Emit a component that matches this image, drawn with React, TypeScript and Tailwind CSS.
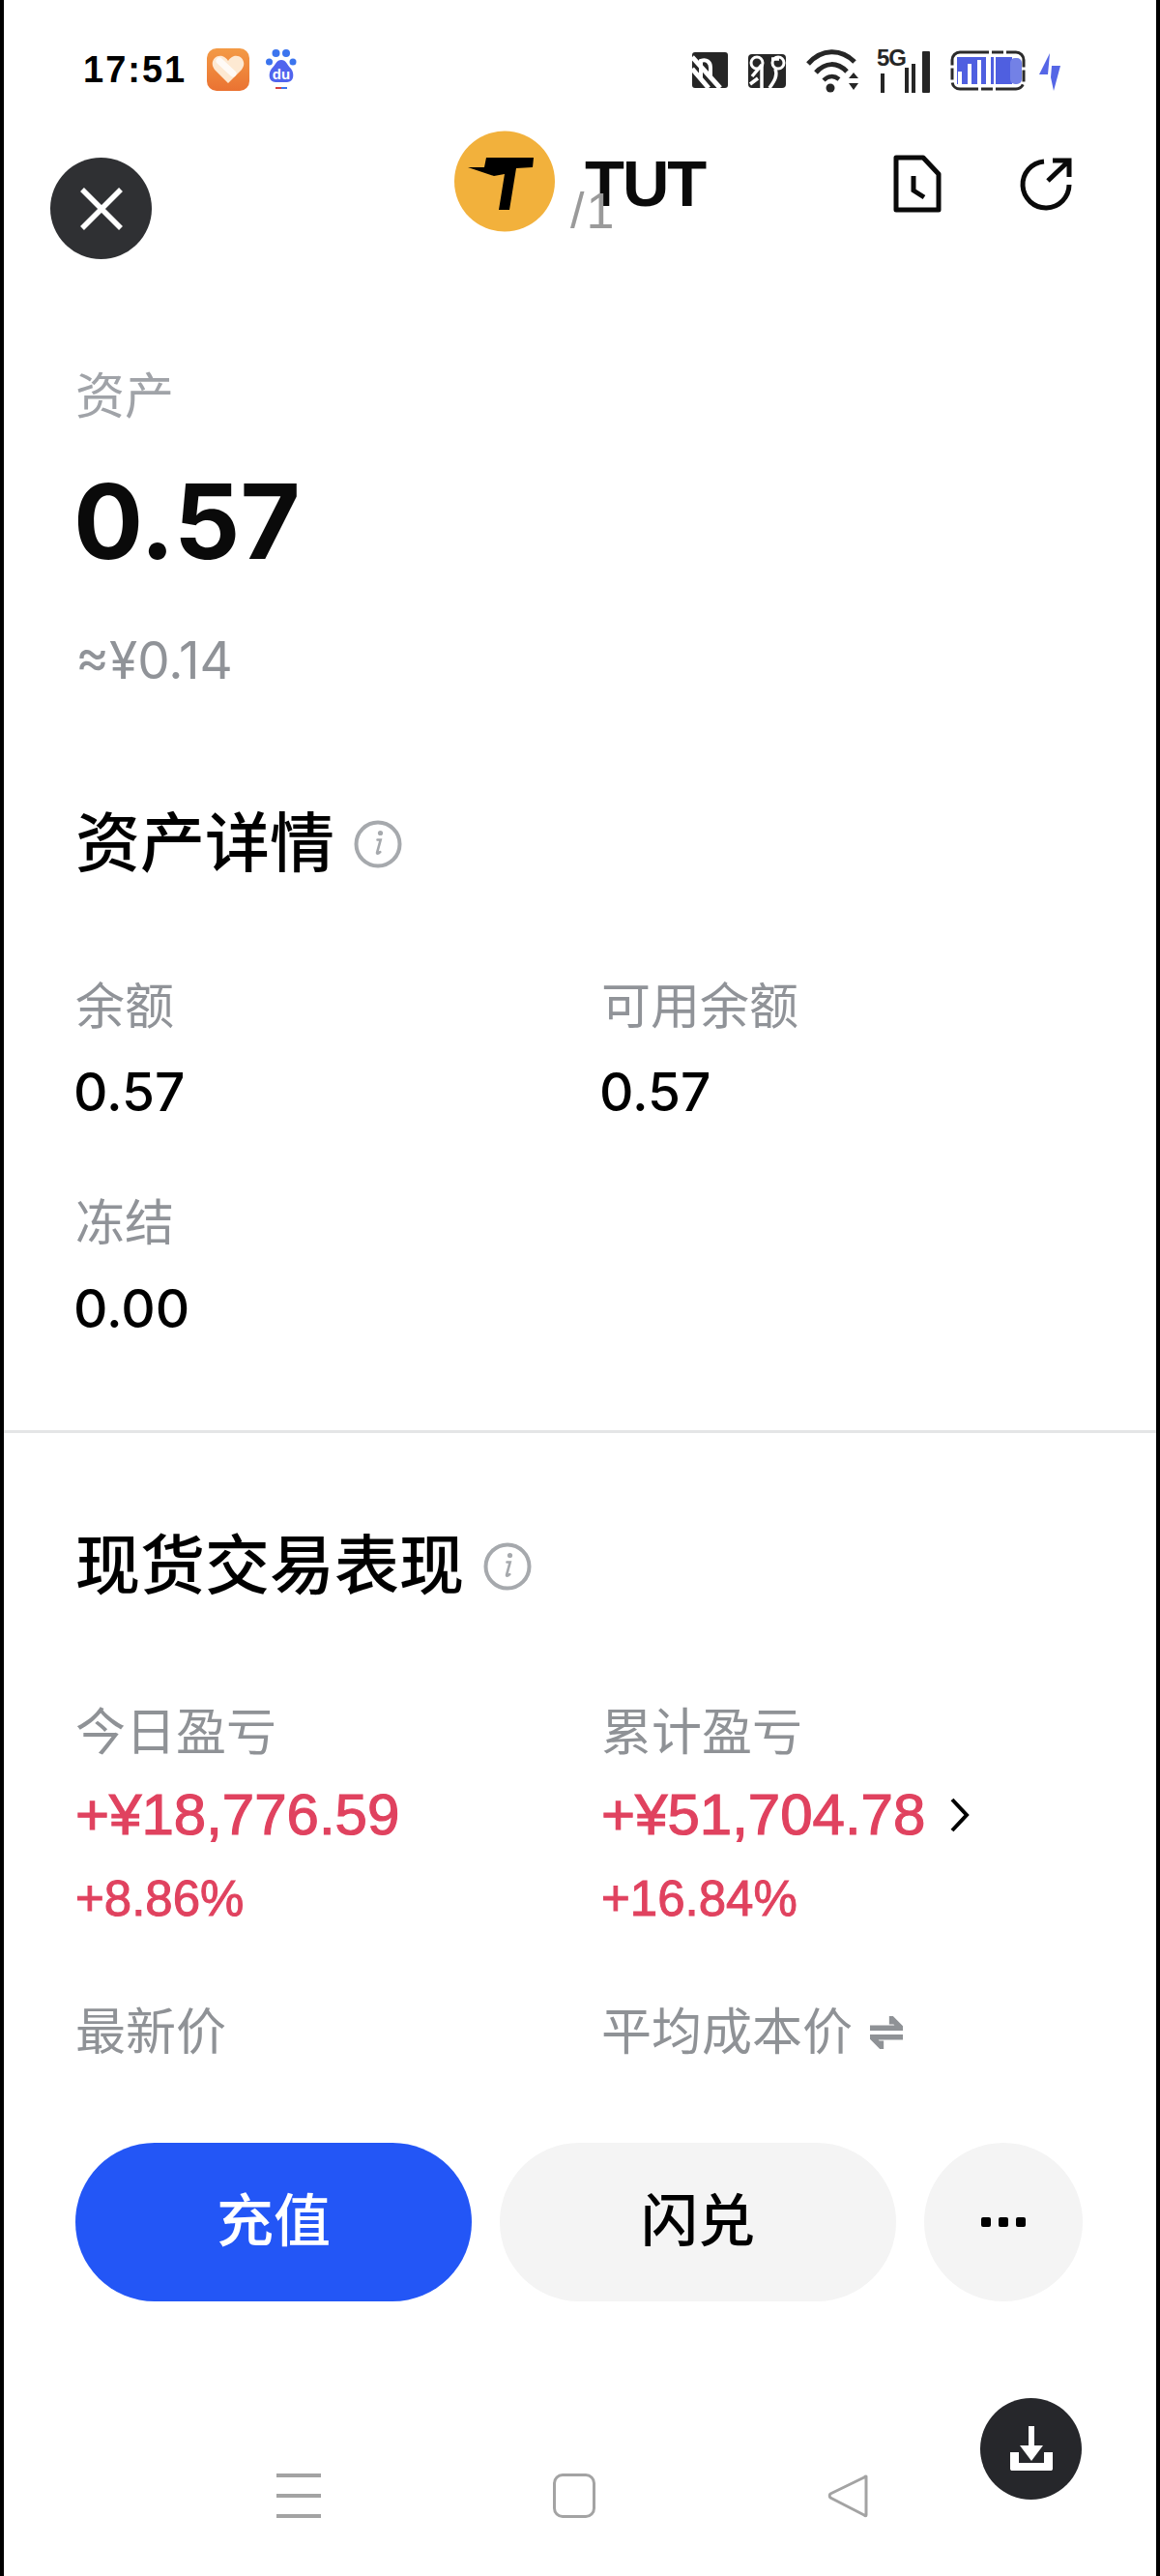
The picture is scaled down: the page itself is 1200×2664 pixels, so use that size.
import React from "react";

const SANS = "font-['Liberation_Sans','Noto_Sans_CJK_SC',sans-serif]";
const INTER = "font-['Inter','Noto_Sans_CJK_SC',sans-serif]";

function InfoIcon() {
  return (
    <svg width="50" height="50" viewBox="0 0 50 50" className="shrink-0">
      <circle cx="25" cy="25" r="22.5" fill="none" stroke="#a6a9ad" strokeWidth="4" />
      <circle cx="27.5" cy="13.5" r="2.6" fill="#a6a9ad" />
      <path d="M24.5 20.5h3.2l-3.6 13.2c-.3 1.2.7 1.6 3.2-.6" fill="none" stroke="#a6a9ad" strokeWidth="2.6" strokeLinecap="round" />
    </svg>
  );
}

function Field({ label, value }: { label: string; value: string }) {
  return (
    <div className="w-[544px] shrink-0">
      <div className="text-[51px] leading-[60px] text-[#909398]">{label}</div>
      <div className={`${INTER} ml-[-2px] mt-[24px] text-[55px] leading-[66px] font-medium text-black`}>{value}</div>
    </div>
  );
}

function StatusIcons() {
  return (
    <div className="flex items-center">
      <svg width="40" height="40" viewBox="0 0 40 40">
        <rect x="1" y="1" width="37" height="37" rx="3" fill="#262626" />
        <path d="M1 6 30 38M1 18 18 38" stroke="#fff" strokeWidth="5" />
        <path d="M10 30V10c6-2 10 1 10 7v12" fill="none" stroke="#fff" strokeWidth="4" />
      </svg>
      <svg width="40" height="40" viewBox="0 0 40 40" className="ml-[19px]">
        <rect x="0" y="3" width="39" height="35" rx="4" fill="#262626" />
        <circle cx="9" cy="12" r="6" fill="none" stroke="#fff" strokeWidth="3" />
        <circle cx="31" cy="12" r="6" fill="none" stroke="#fff" strokeWidth="3" />
        <path d="M4 26 14 14M14 14v24M24 8h8M28 18c3 8-2 14-6 20M2 34l8-6" fill="none" stroke="#fff" strokeWidth="3.5" />
      </svg>
      <svg width="56" height="46" viewBox="0 0 56 46" className="ml-[20px]">
        <path d="M2 16C16 0 36 0 50 14" fill="none" stroke="#262626" strokeWidth="5" />
        <path d="M10 25C20 14 32 14 42 24" fill="none" stroke="#262626" strokeWidth="5" />
        <path d="M18 33c5-5 11-5 16-1" fill="none" stroke="#262626" strokeWidth="4.5" />
        <circle cx="25" cy="41" r="4.5" fill="#262626" />
        <path d="M44 31h10l-5-6zM44 36h10l-5 7z" fill="#262626" />
      </svg>
      <div className="relative ml-[17px] h-[46px] w-[56px]">
        <span className={`${SANS} absolute left-[0px] top-[-3px] text-[24px] leading-[26px] font-bold tracking-[-1px] text-[#262626]`}>5G</span>
        <div className="absolute bottom-[0px] left-[4px] h-[20px] w-[4px] bg-[#262626]" />
        <div className="absolute bottom-[0px] left-[29px] h-[26px] w-[4px] bg-[#262626]" />
        <div className="absolute bottom-[0px] left-[36px] h-[30px] w-[4px] bg-[#262626]" />
        <div className="absolute bottom-[0px] left-[47px] h-[43px] w-[8px] rounded-[1px] bg-[#262626]" />
      </div>
      <svg width="78" height="42" viewBox="0 0 78 42" className="ml-[20px]">
        <rect x="2" y="2" width="74" height="38" rx="8" fill="none" stroke="#2b2b2b" strokeWidth="3" strokeDasharray="30 3 12 3" />
        <rect x="7" y="7" width="38" height="28" fill="#4f5fe0" />
        <rect x="8" y="22" width="4" height="14" fill="#fff" />
        <rect x="18" y="14" width="4" height="22" fill="#fff" />
        <rect x="28" y="10" width="4" height="26" fill="#fff" />
        <rect x="37" y="7" width="5" height="28" fill="#fff" />
        <rect x="47" y="7" width="17" height="28" fill="#4f5fe0" />
        <rect x="62" y="8" width="12" height="27" rx="5" fill="#7381e6" />
      </svg>
      <svg width="24" height="44" viewBox="0 0 24 44" className="ml-[13px]">
        <path d="M12 4 1 26h9zM14 17h9l-7 26-3-14z" fill="#5566e6" />
      </svg>
    </div>
  );
}

export default function App() {
  return (
    <div className={`${SANS} relative flex h-[2664px] w-[1200px] flex-col overflow-hidden border-x-[4px] border-black bg-white`}>
      {/* Status bar */}
      <div className="flex h-[100px] shrink-0 items-start justify-between pl-[82px] pr-[98px] pt-[50px]">
        <div className="flex items-center">
          <span className={`${SANS} w-[128px] text-[38px] leading-[44px] font-bold tracking-[2px] text-black`}>17:51</span>
          <div className="flex h-[44px] w-[44px] items-center justify-center rounded-[10px] bg-gradient-to-b from-[#f39a45] to-[#ea7232]">
            <svg width="34" height="30" viewBox="0 0 34 30">
              <path d="M17 29 3 15C-3 7 4-1 11 1c3 1 5 3 6 5 1-2 3-4 6-5 7-2 14 6 8 14z" fill="#fde9d2" />
              <path d="M8 6 22 19" stroke="#fff" strokeWidth="7" strokeLinecap="round" opacity="0.8" />
            </svg>
          </div>
          <svg width="32" height="44" viewBox="0 0 32 44" className="ml-[17px]">
            <circle cx="10.5" cy="5" r="4" fill="#3b74ee" />
            <circle cx="21" cy="5" r="4" fill="#3b74ee" />
            <circle cx="3.5" cy="14" r="3.5" fill="#3b74ee" />
            <circle cx="28" cy="14" r="3.5" fill="#3b74ee" />
            <path d="M16 12c5 0 6 5 10 9 4 5 3 14-4 14H10c-7 0-8-9-4-14 4-4 5-9 10-9z" fill="#5064ee" />
            <text x="16" y="32" textAnchor="middle" fontSize="15" fontWeight="700" fill="#fff" fontFamily="Liberation Sans">du</text>
            <rect x="10" y="40" width="6" height="2" fill="#d8403f" />
            <rect x="16" y="40" width="6" height="2" fill="#3b74ee" />
          </svg>
        </div>
        <StatusIcons />
      </div>

      {/* Header */}
      <div className="flex h-[110px] shrink-0 items-start pl-[466px] pr-[87px] pt-[35px]">
        <svg width="104" height="105" viewBox="0 0 104 105" className="shrink-0">
          <circle cx="52" cy="52.5" r="52" fill="#f2b13c" />
          <path d="M14 38 31 38 33 28H82L81 38 64 39 57 82H46L52 45 41 47Z" fill="#000" />
        </svg>
        <span className="ml-[31px] mt-[15px] text-[67px] leading-[80px] font-bold tracking-[-2px] text-[#0a0a0a]">TUT</span>
        <div className="ml-auto mt-[25px] flex items-center gap-[79px]">
          <svg width="50" height="60" viewBox="0 0 50 60">
            <path d="M3 3h28l16 17v37H3z" fill="none" stroke="#0a0a0a" strokeWidth="5" strokeLinejoin="round" />
            <path d="M21 22v15l11 7" fill="none" stroke="#0a0a0a" strokeWidth="5" />
          </svg>
          <svg width="56" height="56" viewBox="0 0 56 56">
            <path d="M27 5a24 24 0 1 0 26 24" fill="none" stroke="#0a0a0a" strokeWidth="5" />
            <path d="M31 25 52 5M36 4h17v17" fill="none" stroke="#0a0a0a" strokeWidth="5" />
          </svg>
        </div>
      </div>

      {/* Asset summary */}
      <div className="flex flex-col pl-[74px] pt-[171px]">
        <div className="text-[51px] leading-[60px] text-[#a0a3a8]">资产</div>
        <div className={`${INTER} ml-[-2px] mt-[32px] text-[107px] leading-[132px] font-bold text-[#0a0a0a]`}>0.57</div>
        <div className={`${INTER} mt-[49px] text-[53px] leading-[58px] text-[#909398]`}>≈¥0.14</div>
      </div>

      {/* Details */}
      <div className="flex flex-col pl-[74px] pt-[121px]">
        <div className="flex items-center gap-[20px]">
          <span className="text-[67px] leading-[80px] font-medium text-black">资产详情</span>
          <InfoIcon />
        </div>
        <div className="mt-[99px] flex">
          <Field label="余额" value="0.57" />
          <Field label="可用余额" value="0.57" />
        </div>
        <div className="mt-[74px]">
          <Field label="冻结" value="0.00" />
        </div>
      </div>

      <div className="mt-[93px] h-[3px] shrink-0 bg-[#e4e5e6]" />

      {/* Performance */}
      <div className="flex flex-col pl-[74px] pt-[98px]">
        <div className="flex items-center gap-[20px]">
          <span className="text-[67px] leading-[80px] font-medium text-black">现货交易表现</span>
          <InfoIcon />
        </div>
        <div className="mt-[102px] flex">
          <div className="w-[544px] shrink-0">
            <div className="text-[52px] leading-[60px] text-[#8f9296]">今日盈亏</div>
            <div className="mt-[20px] text-[60px] leading-[70px] text-[#e0425f] [-webkit-text-stroke:1.2px_#e0425f]">+¥18,776.59</div>
            <div className="mt-[22px] text-[51px] leading-[60px] text-[#e0425f] [-webkit-text-stroke:1px_#e0425f]">+8.86%</div>
          </div>
          <div className="w-[544px] shrink-0">
            <div className="text-[52px] leading-[60px] text-[#8f9296]">累计盈亏</div>
            <div className="mt-[20px] flex items-center text-[60px] leading-[70px] text-[#e0425f] [-webkit-text-stroke:1.2px_#e0425f]">
              <span>+¥51,704.78</span>
              <svg width="24" height="40" viewBox="0 0 24 40" className="ml-[24px]">
                <path d="M4 4 19 20 4 36" fill="none" stroke="#000" strokeWidth="4" />
              </svg>
            </div>
            <div className="mt-[22px] text-[51px] leading-[60px] text-[#e0425f] [-webkit-text-stroke:1px_#e0425f]">+16.84%</div>
          </div>
        </div>
        <div className="mt-[78px] flex">
          <div className="w-[544px] shrink-0 text-[52px] leading-[60px] text-[#8f9296]">最新价</div>
          <div className="flex items-center text-[52px] leading-[60px] text-[#8f9296]">
            <span>平均成本价</span>
            <svg width="34" height="34" viewBox="0 0 36 36" className="ml-[18px]">
              <path d="M0 13h34L24 3v6" fill="none" stroke="#8f9296" strokeWidth="6" />
              <path d="M36 23H2l10 10v-6" fill="none" stroke="#8f9296" strokeWidth="6" />
            </svg>
          </div>
        </div>
      </div>

      {/* Action buttons */}
      <div className="mt-[84px] flex items-center gap-[29px] pl-[74px]">
        <div className="flex h-[164px] w-[410px] items-center justify-center rounded-full bg-[#2356f6] text-[59px] font-medium text-white">充值</div>
        <div className="flex h-[164px] w-[410px] items-center justify-center rounded-full bg-[#f4f4f4] text-[59px] font-medium text-black">闪兑</div>
        <div className="flex h-[164px] w-[164px] items-center justify-center gap-[8px] rounded-full bg-[#f4f4f4]">
          <span className="h-[10px] w-[10px] rounded-[2px] bg-black" />
          <span className="h-[10px] w-[10px] rounded-[2px] bg-black" />
          <span className="h-[10px] w-[10px] rounded-[2px] bg-black" />
        </div>
      </div>

      {/* Navigation bar */}
      <div className="mt-[178px] flex h-[46px] items-center pl-[282px]">
        <div className="flex h-[46px] w-[46px] flex-col justify-between">
          <div className="h-[4px] bg-[#a3a3a3]" />
          <div className="h-[4px] bg-[#a3a3a3]" />
          <div className="h-[4px] bg-[#a3a3a3]" />
        </div>
        <div className="ml-[240px] h-[46px] w-[44px] rounded-[10px] border-[3px] border-[#a3a3a3]" />
        <svg width="44" height="46" viewBox="0 0 44 46" className="ml-[240px]">
          <path d="M40 3c-1 0-1 0-2 1L3 21c-1 1-1 3 0 4l35 18c1 1 2 1 2 0z" fill="none" stroke="#a3a3a3" strokeWidth="3" strokeLinejoin="round" />
        </svg>
      </div>

      {/* Floating overlays */}
      <div className="absolute left-[48px] top-[163px] flex h-[105px] w-[105px] items-center justify-center rounded-full bg-[#2f3033]">
        <svg width="46" height="46" viewBox="0 0 46 46">
          <path d="M3 3 43 43M43 3 3 43" stroke="#fff" strokeWidth="5.5" />
        </svg>
      </div>
      <span className="absolute left-[586px] top-[190px] text-[52px] leading-[56px] tracking-[2px] text-[#9a9a9a]">/1</span>
      <div className="absolute left-[1010px] top-[2480px] flex h-[105px] w-[105px] items-center justify-center rounded-full bg-[#26272b]">
        <svg width="50" height="52" viewBox="0 0 50 52">
          <path d="M25 2v32" stroke="#fff" strokeWidth="6" />
          <path d="M13 22h24L25 38z" fill="#fff" />
          <path d="M3 29v17c0 1.500 1 2 2 2h40c1 0 2-.5 2-2V29h-9v11H12V29z" fill="#fff" />
        </svg>
      </div>
    </div>
  );
}
